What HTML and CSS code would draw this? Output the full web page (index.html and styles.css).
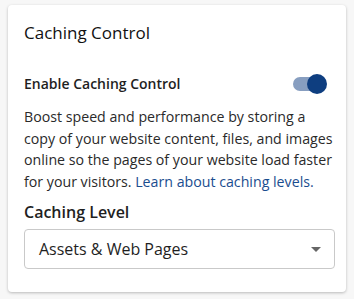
FILE: index.html
```html
<!DOCTYPE html>
<html lang="en">
  <head>
    <meta charset="UTF-8" />
    <meta name="viewport" content="width=device-width, initial-scale=1.0" />
    <title>Caching Control</title>
    <link rel="stylesheet" href="styles.css">
  </head>
  <body>
    <div class="card">
      <h2 class="card-title">Caching Control</h2>
      <div class="toggle-row">
        <span class="toggle-label">Enable Caching Control</span>
        <div class="switch">
          <div class="switch-track"></div>
          <div class="switch-thumb"></div>
        </div>
      </div>
      <p class="desc">
        Boost speed and performance by storing a copy of your website content, files, and images online so the pages of your website load faster for your visitors. <a href="#">Learn about caching levels.</a>
      </p>
      <div class="field-label">Caching Level</div>
      <div class="select">
        <span>Assets &amp; Web Pages</span>
        <span class="caret"></span>
      </div>
    </div>
  </body>
</html>
```

FILE: styles.css
```css
* {
  margin: 0;
  padding: 0;
  box-sizing: border-box;
}
html,
body {
  width: 100%;
  height: 100%;
  background: #f7f7f7;
}
body {
  padding: 5px 8px;
  font-family: "Open Sans", "Noto Sans", sans-serif;
  color: #1f1f1f;
}
.card {
  background: #fff;
  border-radius: 4px;
  box-shadow: 0 1px 3px rgba(0, 0, 0, 0.25);
  padding: 16px 11px 24px 16px;
  height: 287px;
}
.card-title {
  font-size: 17px;
  font-weight: 500;
  line-height: 24px;
  color: #111;
}
.toggle-row {
  display: flex;
  align-items: center;
  justify-content: space-between;
  margin-top: 29px;
  padding-right: 8px;
}
.toggle-label {
  font-size: 14px;
  font-weight: 600;
  line-height: 20px;
}
.switch {
  position: relative;
  width: 36px;
  height: 20px;
}
.switch-track {
  position: absolute;
  left: 2px;
  top: 3px;
  width: 30px;
  height: 14px;
  border-radius: 7px;
  background: #879ec0;
}
.switch-thumb {
  position: absolute;
  right: 0;
  top: 0;
  width: 20px;
  height: 20px;
  border-radius: 50%;
  background: #0e3e80;
}
.desc {
  margin-top: 12px;
  font-size: 14.2px;
  line-height: 21.5px;
  color: #2a2a2a;
}
.desc a {
  color: #1a4d8f;
  text-decoration: none;
}
.field-label {
  margin-top: 8px;
  font-size: 16px;
  font-weight: 600;
  line-height: 24px;
}
.select {
  margin-top: 5px;
  height: 40px;
  border: 1px solid #c9c9c9;
  border-radius: 4px;
  display: flex;
  align-items: center;
  justify-content: space-between;
  padding: 0 13px 0 14px;
  font-size: 16px;
}
.caret {
  width: 0;
  height: 0;
  border-left: 5px solid transparent;
  border-right: 5px solid transparent;
  border-top: 5px solid #666;
}
```
